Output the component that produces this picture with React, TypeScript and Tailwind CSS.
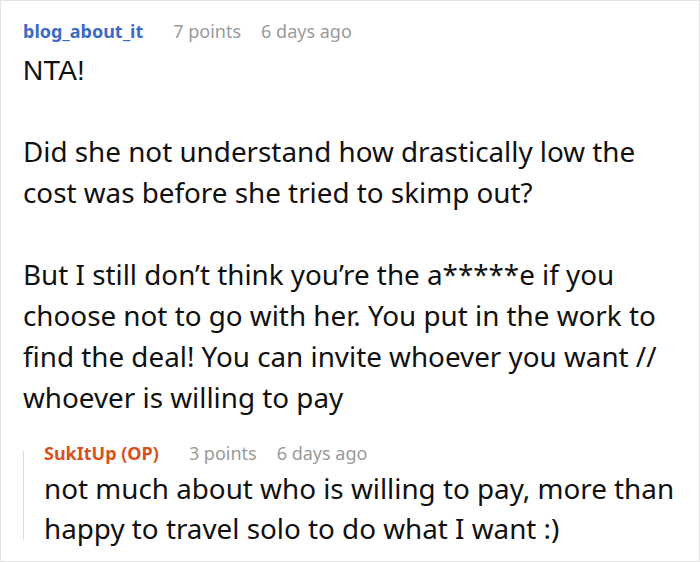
import React from 'react';

const body = "font-['Noto_Sans',sans-serif]";

function Meta({ name, color, points, ago }: { name: string; color: string; points: string; ago: string }) {
  return (
    <div className={`flex items-center h-[24px] text-[18px] ${body}`}>
      <span className={`font-bold ${color}`}>{name}</span>
      <span className="ml-[30px] text-[#9a9a9a]">{points}</span>
      <span className="ml-[20px] text-[#9a9a9a]">{ago}</span>
    </div>
  );
}

function App() {
  return (
    <div className="w-[700px] h-[562px] bg-white border border-[#e2e2e2] overflow-hidden">
      <div className="pl-[22px] pr-[4px] pt-[18px]">
        <Meta name="blog_about_it" color="text-[#3b6cc1]" points="7 points" ago="6 days ago" />
        <div className={`mt-[7px] text-[27.8px] leading-[41px] text-[#111] ${body}`}>
          <p className="font-['Liberation_Sans',sans-serif] text-[28px]">NTA!</p>
          <p className="mt-[40px]">
            Did she not understand how drastically low the
            <br />
            cost was before she tried to skimp out?
          </p>
          <p className="mt-[41px]">
            But I still don’t think you’re the a*****e if you
            <br />
            choose not to go with her. You put in the work to
            <br />
            find the deal! You can invite whoever you want //
            <br />
            whoever is willing to pay
          </p>
        </div>
        <div className="flex mt-[23px]">
          <div className="w-[1px] bg-[#dcdcdc] mt-[10px] mb-[8px]" />
          <div className="pl-[20px]">
            <Meta name="SukItUp (OP)" color="text-[#d6521f]" points="3 points" ago="6 days ago" />
            <p className={`mt-[3px] text-[27.8px] leading-[40px] text-[#111] ${body}`}>
              not much about who is willing to pay, more than
              <br />
              happy to travel solo to do what I want :)
            </p>
          </div>
        </div>
      </div>
    </div>
  );
}

export default App;
